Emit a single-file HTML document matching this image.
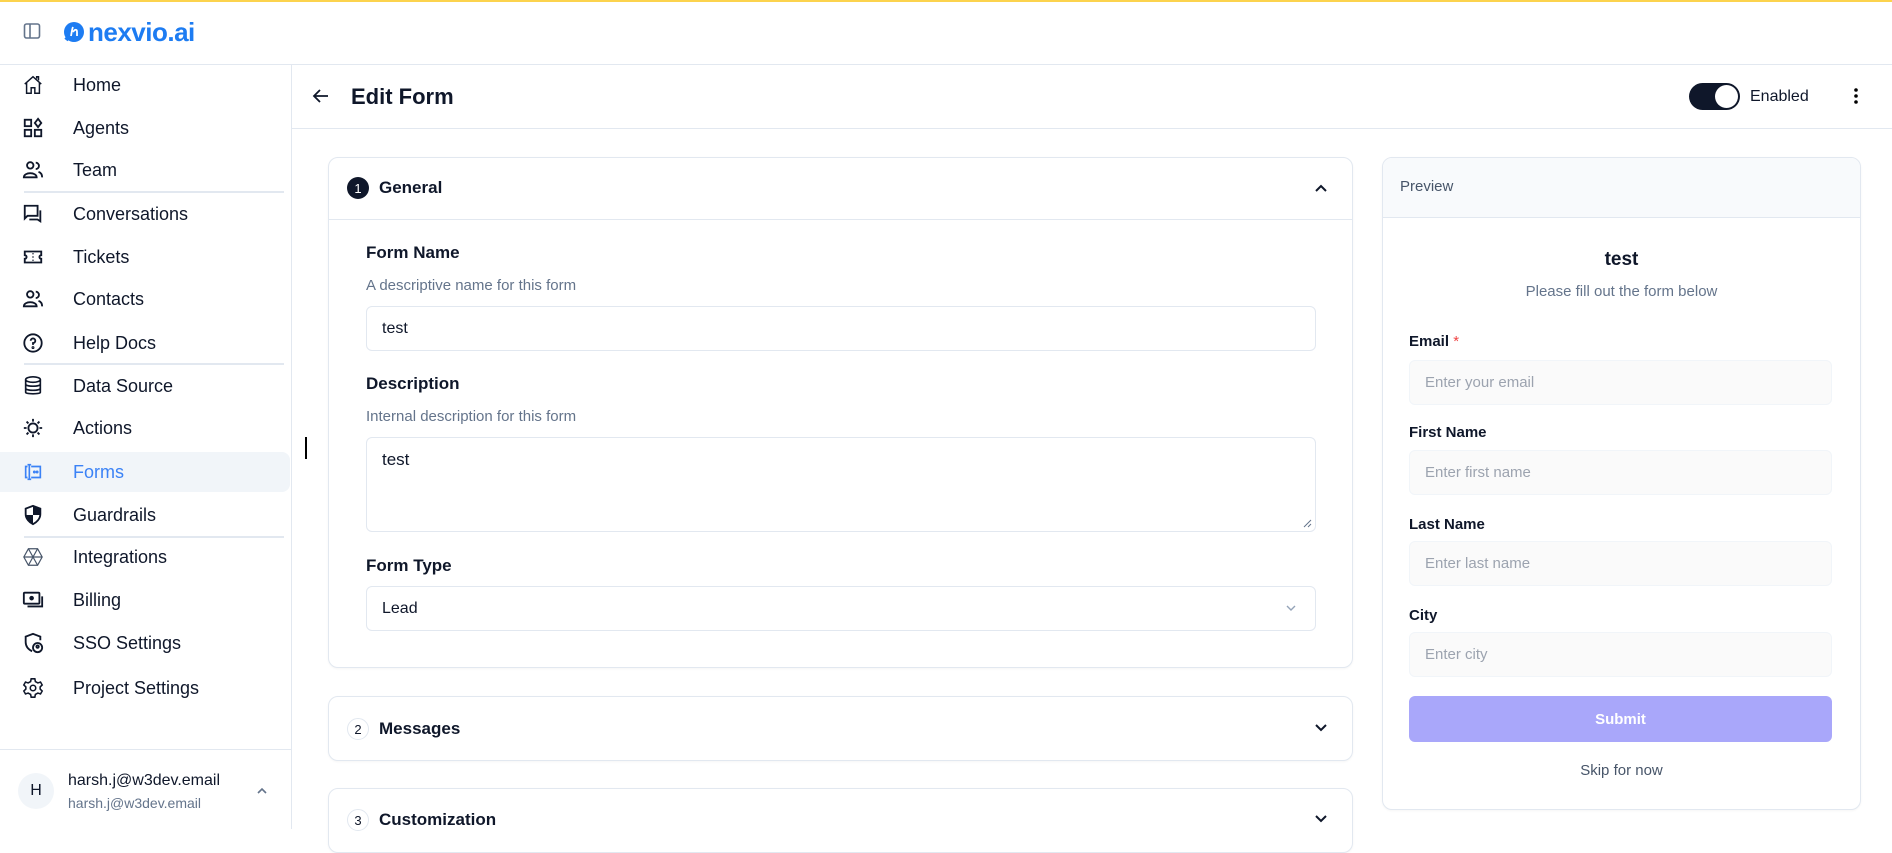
<!DOCTYPE html>
<html><head><meta charset="utf-8"><style>
*{box-sizing:border-box;margin:0;padding:0}
body{width:1892px;height:829px;overflow:hidden;background:#fff;font-family:"Liberation Sans",sans-serif;color:#0f172a;position:relative}
.a{position:absolute}
.top{left:0;top:0;width:1892px;height:2px;background:#fcd34d}
.hdr{left:0;top:64px;width:1892px;height:1px;background:#e2e8f0}
.side{left:291px;top:64px;width:1px;height:765px;background:#e2e8f0}
.nav{left:0;width:290px;height:40px;font-size:18px;display:flex;align-items:center}
.nav svg{position:absolute;left:22px;width:22px;height:22px}
.nav span{position:absolute;left:73px}
.sep{left:24px;width:260px;height:2px;background:#e2e8f0}
.card{border:1px solid #e2e8f0;border-radius:10px;background:#fff;box-shadow:0 1px 2px rgba(0,0,0,.04)}
.lbl{font-size:17px;font-weight:bold;color:#0f172a}
.help{font-size:15px;color:#64748b}
.inp{border:1px solid #e2e8f0;border-radius:6px;font-size:16px;padding-left:15px;display:flex;align-items:center}
.pl{font-size:15px;font-weight:bold}
.pi{left:1409px;width:423px;height:45px;background:#fafafa;border:1px solid #f1f5f9;border-radius:6px;font-size:15px;color:#9ca3af;padding-left:15px;display:flex;align-items:center}
.num{width:22px;height:22px;border-radius:50%;font-size:13px;display:flex;align-items:center;justify-content:center}
</style></head><body>
<div class="a top"></div>
<!-- header -->
<svg class="a" style="left:22px;top:21px" width="20" height="20" viewBox="0 0 20 20"><rect x="2.5" y="3" width="15" height="14" rx="2" fill="none" stroke="#64748b" stroke-width="1.6"/><line x1="8" y1="3" x2="8" y2="17" stroke="#64748b" stroke-width="1.6"/></svg>
<svg class="a" style="left:63px;top:21px" width="22" height="22" viewBox="0 0 22 22"><circle cx="11" cy="11" r="10" fill="#1d7cf2"/><path d="M3 19 L6 15" stroke="#1d7cf2" stroke-width="4"/><path d="M8 15 C9 10 9 8 10 6 M10 11 C12 8 14 8 14 11 L14 15" stroke="#fff" stroke-width="1.8" fill="none"/></svg>
<div class="a" style="left:88px;top:17px;font-size:26px;font-weight:bold;color:#1d7cf2;letter-spacing:-0.5px">nexvio.ai</div>
<div class="a hdr"></div>
<div class="a side"></div>
<!-- sidebar -->
<div class="a nav" style="top:65px"><svg viewBox="0 0 24 24" fill="none" stroke="#0f172a" stroke-width="1.6"><path d="M3 11 L12 3 L21 11 M5 9 V21 H10 V15 H14 V21 H19 V9"/><path d="M16 5 V3 H18 V7"/></svg><span>Home</span></div>
<div class="a nav" style="top:108px"><svg viewBox="0 0 24 24" fill="none" stroke="#0f172a" stroke-width="2"><rect x="3" y="3" width="7" height="7"/><rect x="3" y="14" width="7" height="7"/><rect x="14" y="14" width="7" height="7"/><path d="M17.5 2 L21 6.5 L17.5 11 L14 6.5Z"/></svg><span>Agents</span></div>
<div class="a nav" style="top:150px"><svg viewBox="0 0 24 24" fill="none" stroke="#0f172a" stroke-width="2"><circle cx="9" cy="7" r="3.5"/><path d="M2 20 C2 14 16 14 16 20 Z"/><path d="M15 4 A3.5 3.5 0 0 1 15 11 M18 14 C21 15 22 17 22 20"/></svg><span>Team</span></div>
<div class="a sep" style="top:191px"></div>
<div class="a nav" style="top:194px"><svg viewBox="0 0 24 24" fill="none" stroke="#0f172a" stroke-width="2"><path d="M3 3 H17 V14 H6 L3 17 Z"/><path d="M20 8 V20 L17 18 H8"/></svg><span>Conversations</span></div>
<div class="a nav" style="top:237px"><svg viewBox="0 0 24 24" fill="none" stroke="#0f172a" stroke-width="2"><path d="M3 6 H21 V10 A2 2 0 0 0 21 14 V18 H3 V14 A2 2 0 0 0 3 10 Z"/><path d="M12 8 V9 M12 11.5 V12.5 M12 15 V16"/></svg><span>Tickets</span></div>
<div class="a nav" style="top:279px"><svg viewBox="0 0 24 24" fill="none" stroke="#0f172a" stroke-width="2"><circle cx="9" cy="7" r="3.5"/><path d="M2 20 C2 14 16 14 16 20 Z"/><path d="M15 4 A3.5 3.5 0 0 1 15 11 M18 14 C21 15 22 17 22 20"/></svg><span>Contacts</span></div>
<div class="a nav" style="top:323px"><svg viewBox="0 0 24 24" fill="none" stroke="#0f172a" stroke-width="2"><circle cx="12" cy="12" r="9.5"/><path d="M9.5 9.5 A2.5 2.5 0 1 1 12 12 V14"/><circle cx="12" cy="17" r=".6"/></svg><span>Help Docs</span></div>
<div class="a sep" style="top:363px"></div>
<div class="a nav" style="top:366px"><svg viewBox="0 0 24 24" fill="none" stroke="#0f172a" stroke-width="1.8"><ellipse cx="12" cy="5" rx="8" ry="3"/><path d="M4 5 V19 C4 21 20 21 20 19 V5 M4 10 C4 13 20 13 20 10 M4 14.5 C4 17.5 20 17.5 20 14.5"/></svg><span>Data Source</span></div>
<div class="a nav" style="top:408px"><svg viewBox="0 0 24 24" fill="none" stroke="#0f172a" stroke-width="2"><circle cx="12" cy="12" r="5"/><path d="M12 2 V5 M12 19 V22 M2 12 H5 M19 12 H22 M5 5 L7 7 M17 17 L19 19 M5 19 L7 17 M17 7 L19 5"/></svg><span>Actions</span></div>
<div class="a" style="left:0;top:452px;width:290px;height:40px;background:#f1f5f9;border-radius:0 8px 8px 0"></div>
<div class="a nav" style="top:452px;color:#3b82f6"><svg viewBox="0 0 24 24" fill="none" stroke="#3b82f6" stroke-width="1.8"><path d="M10 6 H20 V18 H10 M6 6 H4 V18 H6"/><path d="M8 4 V20 M6 4 H10 M6 20 H10"/><circle cx="13.5" cy="12" r=".7"/><circle cx="16.5" cy="12" r=".7"/></svg><span>Forms</span></div>
<div class="a nav" style="top:495px"><svg viewBox="0 0 24 24"><path d="M12 2 L20 5 V11 C20 16 16 20 12 22 C8 20 4 16 4 11 V5 Z" fill="none" stroke="#0f172a" stroke-width="2"/><path d="M12 2 V12 H20 V5 Z M12 12 V22 C8 20 4 16 4 12 Z" fill="#0f172a"/></svg><span>Guardrails</span></div>
<div class="a sep" style="top:536px"></div>
<div class="a nav" style="top:537px"><svg viewBox="0 0 24 24" fill="none" stroke="#475569" stroke-width="1.3"><path d="M7 3 H17 L22 12 L17 21 H7 L2 12 Z"/><path d="M7 3 L17 21 M17 3 L7 21 M2 12 H22"/></svg><span>Integrations</span></div>
<div class="a nav" style="top:580px"><svg viewBox="0 0 24 24" fill="none" stroke="#0f172a" stroke-width="2"><rect x="2" y="4" width="17" height="12" rx="1"/><circle cx="10.5" cy="10" r="1.5" fill="#0f172a"/><path d="M22 8 V19 H6"/></svg><span>Billing</span></div>
<div class="a nav" style="top:623px"><svg viewBox="0 0 24 24" fill="none" stroke="#0f172a" stroke-width="2"><path d="M11 21 C7 19 4 16 4 11 V5 L12 2 L20 5 V9"/><circle cx="17" cy="17" r="5"/><circle cx="17" cy="16" r="1.3"/></svg><span>SSO Settings</span></div>
<div class="a nav" style="top:668px"><svg viewBox="0 0 24 24" fill="none" stroke="#0f172a" stroke-width="1.7"><circle cx="12" cy="12" r="3"/><path d="M10 2 H14 L14.6 5 L17.3 6.5 L20.2 5.5 L22 8.7 L19.8 10.8 V13.2 L22 15.3 L20.2 18.5 L17.3 17.5 L14.6 19 L14 22 H10 L9.4 19 L6.7 17.5 L3.8 18.5 L2 15.3 L4.2 13.2 V10.8 L2 8.7 L3.8 5.5 L6.7 6.5 L9.4 5 Z"/></svg><span>Project Settings</span></div>
<div class="a" style="left:0;top:749px;width:291px;height:1px;background:#e2e8f0"></div>
<div class="a" style="left:18px;top:773px;width:36px;height:36px;border-radius:50%;background:#f1f5f9;font-size:16px;display:flex;align-items:center;justify-content:center">H</div>
<div class="a" style="left:68px;top:772px;font-size:16px">harsh.j@w3dev.email</div>
<div class="a" style="left:68px;top:795px;font-size:14px;color:#64748b">harsh.j@w3dev.email</div>
<svg class="a" style="left:255px;top:784px" width="14" height="14" viewBox="0 0 14 14"><path d="M3 9 L7 5 L11 9" fill="none" stroke="#64748b" stroke-width="1.6"/></svg>
<!-- page header -->
<svg class="a" style="left:311px;top:86px" width="20" height="20" viewBox="0 0 20 20"><path d="M17 10 H3 M9 4 L3 10 L9 16" fill="none" stroke="#0f172a" stroke-width="1.8"/></svg>
<div class="a" style="left:351px;top:84px;font-size:22px;font-weight:bold">Edit Form</div>
<div class="a" style="left:1689px;top:83px;width:51px;height:27px;border-radius:14px;background:#0f172a"></div>
<div class="a" style="left:1715px;top:85px;width:23px;height:23px;border-radius:50%;background:#fff"></div>
<div class="a" style="left:1750px;top:88px;font-size:16px">Enabled</div>
<svg class="a" style="left:1849px;top:85px" width="14" height="22" viewBox="0 0 14 22"><circle cx="7" cy="5" r="1.8"/><circle cx="7" cy="11" r="1.8"/><circle cx="7" cy="17" r="1.8"/></svg>
<div class="a" style="left:292px;top:128px;width:1600px;height:1px;background:#e2e8f0"></div>
<div class="a" style="left:305px;top:437px;width:2px;height:22px;background:#000"></div>
<!-- general card -->
<div class="a card" style="left:328px;top:157px;width:1025px;height:511px"></div>
<div class="a" style="left:329px;top:219px;width:1023px;height:1px;background:#e2e8f0"></div>
<div class="a num" style="left:347px;top:177px;background:#0f172a;color:#fff">1</div>
<div class="a" style="left:379px;top:178px;font-size:17px;font-weight:bold">General</div>
<svg class="a" style="left:1313px;top:180px" width="16" height="16" viewBox="0 0 16 16"><path d="M3 11 L8 6 L13 11" fill="none" stroke="#0f172a" stroke-width="2"/></svg>
<div class="a lbl" style="left:366px;top:243px">Form Name</div>
<div class="a help" style="left:366px;top:277px">A descriptive name for this form</div>
<div class="a inp" style="left:366px;top:306px;width:950px;height:45px">test</div>
<div class="a lbl" style="left:366px;top:374px">Description</div>
<div class="a help" style="left:366px;top:408px">Internal description for this form</div>
<div class="a inp" style="left:366px;top:437px;width:950px;height:95px;align-items:flex-start;padding-top:12px;font-size:17px">test</div>
<svg class="a" style="left:1302px;top:518px" width="10" height="10" viewBox="0 0 10 10"><path d="M9 2 L2 9 M9 6 L6 9" stroke="#64748b" stroke-width="1"/></svg>
<div class="a lbl" style="left:366px;top:556px">Form Type</div>
<div class="a inp" style="left:366px;top:586px;width:950px;height:45px">Lead</div>
<svg class="a" style="left:1284px;top:602px" width="14" height="12" viewBox="0 0 14 12"><path d="M3 4 L7 8 L11 4" fill="none" stroke="#94a3b8" stroke-width="1.4"/></svg>
<!-- messages -->
<div class="a card" style="left:328px;top:696px;width:1025px;height:65px"></div>
<div class="a num" style="left:347px;top:718px;border:1px solid #e2e8f0">2</div>
<div class="a" style="left:379px;top:719px;font-size:17px;font-weight:bold">Messages</div>
<svg class="a" style="left:1313px;top:720px" width="16" height="16" viewBox="0 0 16 16"><path d="M3 5 L8 10 L13 5" fill="none" stroke="#0f172a" stroke-width="2"/></svg>
<div class="a card" style="left:328px;top:788px;width:1025px;height:65px"></div>
<div class="a num" style="left:347px;top:809px;border:1px solid #e2e8f0">3</div>
<div class="a" style="left:379px;top:810px;font-size:17px;font-weight:bold">Customization</div>
<svg class="a" style="left:1313px;top:811px" width="16" height="16" viewBox="0 0 16 16"><path d="M3 5 L8 10 L13 5" fill="none" stroke="#0f172a" stroke-width="2"/></svg>
<!-- preview -->
<div class="a card" style="left:1382px;top:157px;width:479px;height:653px;overflow:hidden"><div style="height:60px;background:#f8fafc;border-bottom:1px solid #e2e8f0"></div></div>
<div class="a" style="left:1400px;top:178px;font-size:15px;color:#475569">Preview</div>
<div class="a" style="left:1382px;top:249px;width:479px;text-align:center;font-size:19px;font-weight:bold">test</div>
<div class="a" style="left:1382px;top:283px;width:479px;text-align:center;font-size:15px;color:#64748b">Please fill out the form below</div>
<div class="a pl" style="left:1409px;top:333px">Email <span style="color:#ef4444;font-weight:normal">*</span></div>
<div class="a pi" style="top:360px">Enter your email</div>
<div class="a pl" style="left:1409px;top:424px">First Name</div>
<div class="a pi" style="top:450px">Enter first name</div>
<div class="a pl" style="left:1409px;top:516px">Last Name</div>
<div class="a pi" style="top:541px">Enter last name</div>
<div class="a pl" style="left:1409px;top:607px">City</div>
<div class="a pi" style="top:632px">Enter city</div>
<div class="a" style="left:1409px;top:696px;width:423px;height:46px;background:#a9a7fa;border-radius:6px;color:#fff;font-size:15px;font-weight:bold;display:flex;align-items:center;justify-content:center">Submit</div>
<div class="a" style="left:1382px;top:762px;width:479px;text-align:center;font-size:15px;color:#475569">Skip for now</div>
</body></html>
